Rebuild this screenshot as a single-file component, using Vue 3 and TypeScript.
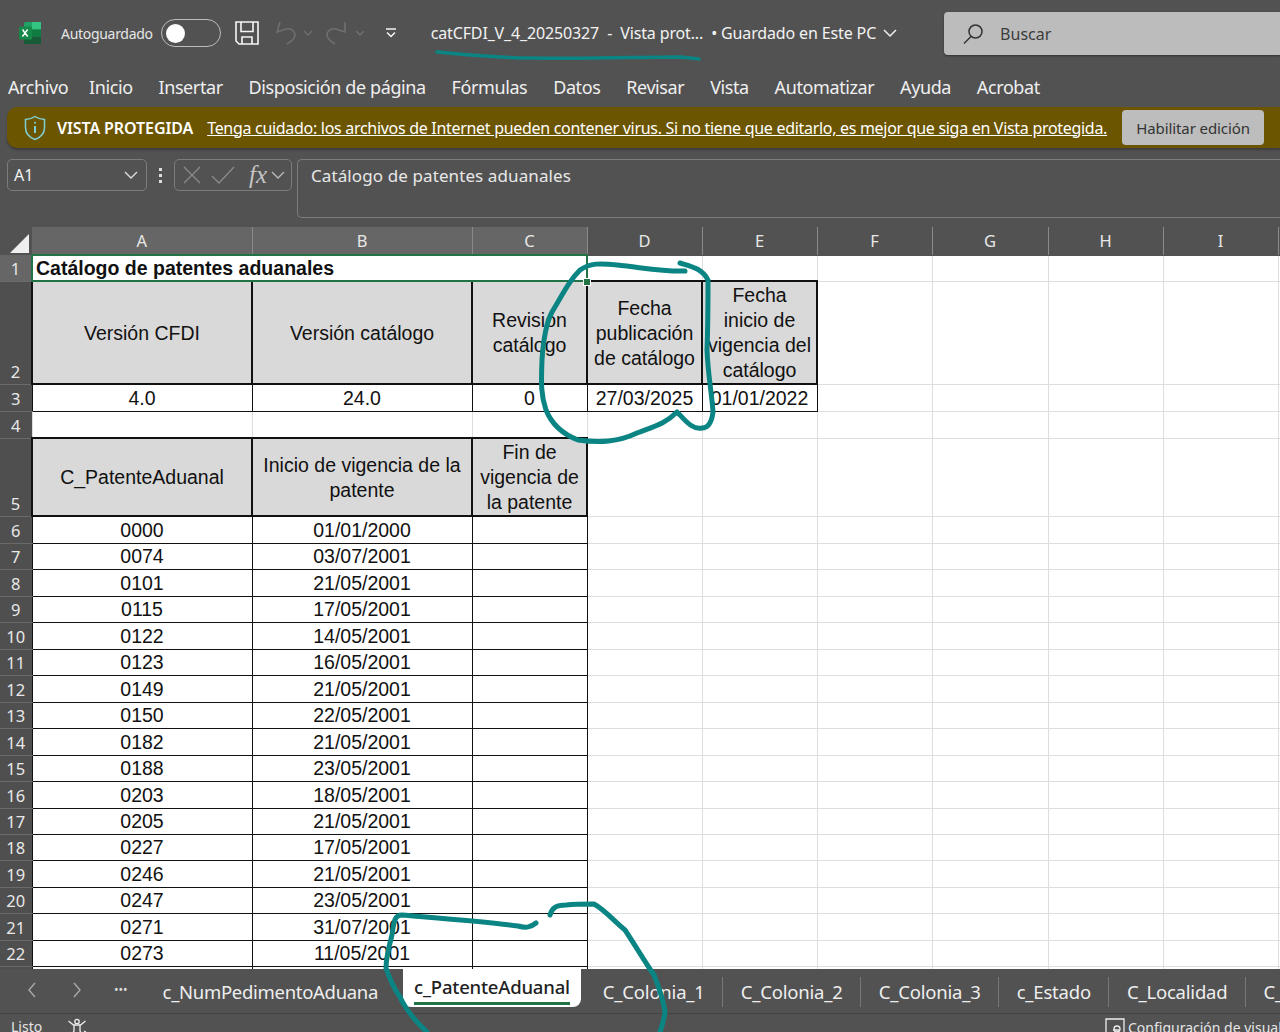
<script setup lang="ts">
type Cell = { text?: string, cls?: string, span?: number }
type Row = { n: number, h: number, cells: Cell[] }

const menu = ['Archivo', 'Inicio', 'Insertar', 'Disposición de página', 'Fórmulas', 'Datos', 'Revisar', 'Vista', 'Automatizar', 'Ayuda', 'Acrobat']
const columns = [
    { name: 'A', w: 220, on: true }, { name: 'B', w: 220, on: true }, { name: 'C', w: 115, on: true },
    { name: 'D', w: 115 }, { name: 'E', w: 115 }, { name: 'F', w: 115 }, { name: 'G', w: 116 },
    { name: 'H', w: 115 }, { name: 'I', w: 115 }, { name: '', w: 2 }
]
const tabsAfter = ['C_Colonia_1', 'C_Colonia_2', 'C_Colonia_3', 'c_Estado', 'C_Localidad', 'C_']

const patentes: [string, string][] = [
    ['0000', '01/01/2000'], ['0074', '03/07/2001'], ['0101', '21/05/2001'], ['0115', '17/05/2001'],
    ['0122', '14/05/2001'], ['0123', '16/05/2001'], ['0149', '21/05/2001'], ['0150', '22/05/2001'],
    ['0182', '21/05/2001'], ['0188', '23/05/2001'], ['0203', '18/05/2001'], ['0205', '21/05/2001'],
    ['0227', '17/05/2001'], ['0246', '21/05/2001'], ['0247', '23/05/2001'], ['0271', '31/07/2001'],
    ['0273', '11/05/2001']
]

function blanks(count: number): Cell[] {
    return Array.from({ length: count }, () => ({}))
}

const dataHeights = [27, 26, 27, 26, 27, 26, 27, 26, 27, 26, 27, 26, 26, 27, 26, 27, 26]

const rows: Row[] = [
    { n: 1, h: 26, cells: [{ text: 'Catálogo de patentes aduanales', cls: 'title', span: 3 }, ...blanks(7)] },
    {
        n: 2, h: 100, cells: [
            { text: 'Versión CFDI', cls: 'head' }, { text: 'Versión catálogo', cls: 'head' },
            { text: 'Revisión\ncatálogo', cls: 'head' }, { text: 'Fecha\npublicación\nde catálogo', cls: 'head' },
            { text: 'Fecha\ninicio de\nvigencia del\ncatálogo', cls: 'head' }, ...blanks(5)
        ]
    },
    {
        n: 3, h: 27, cells: [
            { text: '4.0', cls: 'line' }, { text: '24.0', cls: 'line' }, { text: '0', cls: 'line' },
            { text: '27/03/2025', cls: 'line' }, { text: '01/01/2022', cls: 'line' }, ...blanks(5)
        ]
    },
    { n: 4, h: 27, cells: blanks(10) },
    {
        n: 5, h: 77, cells: [
            { text: 'C_PatenteAduanal', cls: 'head' }, { text: 'Inicio de vigencia de la\npatente', cls: 'head' },
            { text: 'Fin de\nvigencia de\nla patente', cls: 'head' }, ...blanks(7)
        ]
    },
    ...patentes.map(([clave, fecha], i): Row => ({
        n: i + 6, h: dataHeights[i], cells: [
            { text: clave, cls: 'line' }, { text: fecha, cls: 'line' }, { cls: 'line' }, ...blanks(7)
        ]
    })),
    { n: 23, h: 26, cells: [{ cls: 'line' }, { cls: 'line' }, { cls: 'line' }, ...blanks(7)] }
]
</script>

<template>
    <div class="app">
        <header class="titlebar">
            <svg class="logo" width="24" height="24" viewBox="0 0 24 24">
                <rect x="6" y="1" width="17" height="22" rx="1.500" fill="#21a366" />
                <rect x="14" y="1" width="9" height="7.500" fill="#33c481" />
                <rect x="14" y="8.500" width="9" height="7" fill="#107c41" />
                <rect x="6" y="15.500" width="17" height="7.500" fill="#185c37" />
                <rect x="1" y="5.500" width="13" height="13" rx="1.200" fill="#15894a" />
                <path d="M4.600 8.500l2.400 3.600-2.600 3.400M9.600 8.500L7 12.100l2.800 3.400" stroke="#fff" stroke-width="1.500" fill="none" />
            </svg>
            <span class="autosave">Autoguardado</span>
            <span class="toggle"><span class="knob"></span></span>
            <svg class="save" width="24" height="24" viewBox="0 0 24 24" fill="none" stroke="#f5f5f5" stroke-width="1.600">
                <path d="M1 1h22v22H4l-3-3z" />
                <path d="M6 1v9.500h12V1M7 23v-7h10v7" />
            </svg>
            <svg class="undo" width="22" height="24" viewBox="0 0 22 24" fill="none" stroke="#6f6f6f" stroke-width="1.600">
                <path d="M5 1L2 11l9-3c5-1 9 2 9 6 0 3-3 6-8 9" />
            </svg>
            <svg class="tiny" width="10" height="6" viewBox="0 0 10 6" fill="none" stroke="#6f6f6f" stroke-width="1.300"><path d="M1 1l4 4 4-4" /></svg>
            <svg class="redo" width="22" height="24" viewBox="0 0 22 24" fill="none" stroke="#6f6f6f" stroke-width="1.600">
                <path d="M19 1v10l-9-3C5 7 1 10 1 14c0 3 3 6 8 9" />
            </svg>
            <svg class="tiny next" width="10" height="6" viewBox="0 0 10 6" fill="none" stroke="#6f6f6f" stroke-width="1.300"><path d="M1 1l4 4 4-4" /></svg>
            <svg class="custom" width="12" height="12" viewBox="0 0 12 12" fill="none" stroke="#f5f5f5" stroke-width="1.500">
                <path d="M1 2h10M2 5.500l4 4 4-4" />
            </svg>
            <span class="docname">catCFDI_V_4_20250327&nbsp; -&nbsp; Vista prot...&nbsp; • Guardado en Este PC</span>
            <svg class="docchev" width="14" height="9" viewBox="0 0 14 9" fill="none" stroke="#f0f0f0" stroke-width="1.500"><path d="M1 1l6 6 6-6" /></svg>
            <div class="search">
                <svg width="22" height="22" viewBox="0 0 22 22" fill="none" stroke="#333" stroke-width="1.500">
                    <circle cx="13.500" cy="8.500" r="6.500" />
                    <path d="M9 13.500L2 20.500" />
                </svg>
                <span>Buscar</span>
            </div>
        </header>

        <nav class="menu">
            <span v-for="item in menu" :key="item">{{ item }}</span>
        </nav>

        <div class="warning">
            <svg width="22" height="26" viewBox="0 0 22 26" fill="none" stroke="#7fd0d6" stroke-width="1.500">
                <path d="M11 1.500c3 2 6 3 9.500 3v8c0 6-4 10-9.500 12-5.500-2-9.500-6-9.500-12v-8c3.500 0 6.500-1 9.500-3z" />
                <path d="M11 11v7" stroke-width="2" />
                <circle cx="11" cy="7.800" r="1" fill="#7fd0d6" stroke="none" />
            </svg>
            <strong>VISTA PROTEGIDA</strong>
            <a>Tenga cuidado: los archivos de Internet pueden contener virus. Si no tiene que editarlo, es mejor que siga en Vista protegida.</a>
            <button class="enable">Habilitar edición</button>
        </div>

        <div class="formula">
            <div class="namebox">
                <span>A1</span>
                <svg width="14" height="9" viewBox="0 0 14 9" fill="none" stroke="#ddd" stroke-width="1.400"><path d="M1 1l6 6 6-6" /></svg>
            </div>
            <span class="dots"><i></i><i></i><i></i></span>
            <div class="fxbox">
                <svg width="18" height="18" viewBox="0 0 18 18" fill="none" stroke="#8a8a8a" stroke-width="1.300"><path d="M1 1l16 16M17 1L1 17" /></svg>
                <svg width="24" height="18" viewBox="0 0 24 18" fill="none" stroke="#8a8a8a" stroke-width="1.300"><path d="M1 10l7 7L23 1" /></svg>
                <span class="fx">fx</span>
                <svg width="14" height="8" viewBox="0 0 14 8" fill="none" stroke="#bbb" stroke-width="1.300"><path d="M1 1l6 6 6-6" /></svg>
            </div>
            <div class="bar">Catálogo de patentes aduanales</div>
        </div>

        <div class="sheet">
            <table>
                <colgroup>
                    <col style="width: 32px" />
                    <col v-for="col in columns" :key="col.name" :style="{ width: col.w + 'px' }" />
                </colgroup>
                <thead>
                    <tr>
                        <th class="corner"><span></span></th>
                        <th v-for="col in columns" :key="col.name" class="colhead" :class="{ on: col.on }">{{ col.name }}</th>
                    </tr>
                </thead>
                <tbody>
                    <tr v-for="row in rows" :key="row.n" :style="{ height: row.h + 'px' }">
                        <th class="rowhead" :class="{ on: row.n === 1 }">{{ row.n < 23 ? row.n : '' }}</th>
                        <td v-for="(cell, i) in row.cells" :key="i" :class="cell.cls" :colspan="cell.span">{{ cell.text }}</td>
                    </tr>
                </tbody>
            </table>
            <span class="handle"></span>
        </div>

        <div class="tabs">
            <svg class="nav" width="10" height="16" viewBox="0 0 10 16" fill="none" stroke="#a8a8a8" stroke-width="1.400"><path d="M8 1L2 8l6 7" /></svg>
            <svg class="nav next" width="10" height="16" viewBox="0 0 10 16" fill="none" stroke="#a8a8a8" stroke-width="1.400"><path d="M2 1l6 7-6 7" /></svg>
            <span class="more">•••</span>
            <span class="tab first">c_NumPedimentoAduana</span>
            <span class="tab active"><b>c_PatenteAduanal</b></span>
            <span v-for="tab in tabsAfter" :key="tab" class="tab">{{ tab }}</span>
        </div>

        <footer class="status">
            <span class="ready">Listo</span>
            <svg class="access" width="22" height="18" viewBox="0 0 22 18" fill="none" stroke="#eee" stroke-width="1.300">
                <circle cx="10" cy="3.500" r="2.200" />
                <path d="M1.500 3l5 4h7l5-4M7 7v6l-3 5M13 7v6l3 5M17 13l3 2-2 2" />
            </svg>
            <div class="view">
                <svg width="20" height="16" viewBox="0 0 20 16" fill="none" stroke="#eee" stroke-width="1.300">
                    <path d="M1 14V1h18v13M8 12h6" />
                    <circle cx="12" cy="11" r="3" />
                </svg>
                <span>Configuración de visualización</span>
            </div>
        </footer>

        <!-- trazos a mano sobre la captura -->
        <svg class="ink" width="1280" height="1032" viewBox="0 0 1280 1032" fill="none" stroke="#0b8583" stroke-width="5" stroke-linecap="round" stroke-linejoin="round">
            <path d="M437 52C470 55 500 58 530 58C590 59 640 57 681 57L699 59" stroke-width="3.500" />
            <path d="M685 271C665 272 645 268 617 265C600 263 590 263 580 270C570 280 565 290 552 312C545 325 543 345 542 360C541 385 541 395 546 410C552 425 565 435 578 440C600 443 618 442 637 433C655 426 665 424 677 412C685 420 692 430 702 428C710 428 712 420 713 412C712 395 708 375 707 350C708 325 708 300 708 280C702 268 690 266 680 263" />
            <path d="M536 923C530 928 525 928 518 926C490 922 450 919 402 915C395 915 394 920 392 935C388 950 386 960 386 968C390 980 395 990 400 997C405 1008 412 1018 427 1032" />
            <path d="M550 915C552 908 556 905 566 905C575 904 585 904 594 904C605 910 615 922 625 930C635 945 645 962 654 975C660 990 664 1005 665 1012C664 1020 662 1026 660 1032" />
        </svg>
    </div>
</template>

<style>
html, body {
    margin: 0;
    background: #525252;
}
</style>

<style scoped>
.app {
    position: relative;
    width: 1280px;
    height: 1032px;
    overflow: hidden;
    display: flex;
    flex-direction: column;
    background: #525252;
    color: #f2f2f2;
    font-family: "Noto Sans", "Liberation Sans", sans-serif;
}

.titlebar {
    flex: none;
    height: 66px;
    display: flex;
    align-items: center;
    padding-left: 18px;
    box-sizing: border-box;
}

.logo {
    flex: none;
}

.autosave {
    margin-left: 19px;
    font-size: 14px;
    letter-spacing: -0.3px;
    color: #e6e6e6;
}

.toggle {
    margin-left: 8px;
    width: 54px;
    height: 26px;
    border: 1.500px solid #bdbdbd;
    border-radius: 15px;
    display: flex;
    align-items: center;
    padding-left: 4px;
}

.knob {
    width: 19px;
    height: 19px;
    border-radius: 50%;
    background: #fff;
}

.save {
    margin-left: 14px;
}

.undo {
    margin-left: 16px;
}

.redo {
    margin-left: 13px;
}

.tiny {
    margin-left: 6px;
}

.tiny.next {
    margin-left: 7px;
}

.custom {
    margin-left: 20px;
}

.docname {
    margin-left: 34px;
    font-size: 16px;
    letter-spacing: -0.14px;
    white-space: nowrap;
}

.docchev {
    margin-left: 7px;
}

.search {
    margin-left: 47px;
    flex: 1;
    height: 43px;
    margin-top: 1px;
    border-radius: 4px 0 0 4px;
    background: #bcbcbc;
    box-shadow: 0 1px 2px #333;
    display: flex;
    align-items: center;
    gap: 16px;
    padding-left: 18px;
    color: #3c3c3c;
    font-size: 16px;
}

.menu {
    flex: none;
    height: 41px;
    display: flex;
    align-items: center;
    gap: 25.800px;
    padding: 0 0 0 8px;
    box-sizing: border-box;
    font-size: 18px;
    letter-spacing: -0.4px;
    color: #efefef;
    white-space: nowrap;
}

.menu span:first-child {
    margin-right: -5px;
}

.warning {
    flex: none;
    height: 41px;
    margin-left: 7px;
    border-radius: 10px 0 0 10px;
    background: #6c5500;
    display: flex;
    align-items: center;
    padding-left: 17px;
    box-shadow: 0 2px 2px #3d3d3d;
    font-size: 16px;
    letter-spacing: -0.3px;
    color: #fff;
}

.warning strong {
    margin-left: 11px;
    font-weight: 600;
    letter-spacing: -0.1px;
    white-space: nowrap;
}

.warning a {
    margin-left: 14px;
    text-decoration: underline;
    white-space: nowrap;
}

.enable {
    margin-left: 15px;
    width: 142px;
    height: 35px;
    border: none;
    border-radius: 4px;
    background: #bdbdbd;
    color: #333;
    font: inherit;
    font-size: 15px;
    letter-spacing: -0.1px;
    flex: none;
}

.formula {
    flex: none;
    height: 79px;
    display: flex;
    align-items: flex-start;
    padding: 11px 0 0 7px;
    box-sizing: border-box;
}

.namebox, .fxbox {
    height: 32px;
    border: 1px solid #7c7c7c;
    border-radius: 5px;
    box-sizing: border-box;
    display: flex;
    align-items: center;
}

.namebox {
    width: 140px;
    justify-content: space-between;
    padding: 0 8px 0 6px;
    font-size: 16px;
}

.dots {
    width: 27px;
    height: 32px;
    display: flex;
    flex-direction: column;
    align-items: center;
    justify-content: center;
    gap: 3px;
}

.dots i {
    width: 3px;
    height: 3px;
    background: #ddd;
}

.fxbox {
    width: 118px;
    gap: 10px;
    padding-left: 8px;
}

.fx {
    font-family: "Liberation Serif", serif;
    font-style: italic;
    font-size: 25px;
    color: #c4c4c4;
    margin-left: 4px;
    margin-right: -6px;
}

.bar {
    margin-left: 5px;
    flex: 1;
    height: 59px;
    border: 1px solid #7c7c7c;
    border-right: none;
    border-radius: 5px 0 0 5px;
    box-sizing: border-box;
    padding: 4px 0 0 13px;
    font-size: 17px;
    letter-spacing: 0.1px;
    color: #e8e8e8;
}

.sheet {
    position: relative;
    flex: none;
    height: 742px;
    overflow: hidden;
    background: #fff;
}

table {
    table-layout: fixed;
    border-collapse: collapse;
    width: 1280px;
    font-family: "Liberation Sans", Arial, sans-serif;
    font-size: 19.500px;
    color: #111;
}

td {
    padding: 0;
    border: 1px solid #dedede;
    text-align: center;
    white-space: pre-line;
    line-height: 20px;
}

td.title {
    border: 2px solid #217346;
    text-align: left;
    font-weight: bold;
    padding-left: 3px;
}

td.head {
    background: #d9d9d9;
    border: 2px solid #111;
    line-height: 25px;
    padding-top: 1px;
}

td.line {
    border: 1px solid #111;
}

th {
    padding: 0;
    font-weight: normal;
    font-family: "Noto Sans", sans-serif;
    color: #e8e8e8;
    font-size: 16.500px;
    line-height: 20px;
}

.colhead {
    height: 27px;
    background: #525252;
    border-right: 1px solid #8a8a8a;
    border-bottom: 1px solid #525252;
}

.colhead.on {
    background: #666;
}

.corner {
    background: #525252;
}

.corner span {
    display: block;
    width: 0;
    height: 0;
    margin-left: 10px;
    margin-top: 4px;
    border-left: 19px solid transparent;
    border-bottom: 19px solid #efefef;
}

.rowhead {
    background: #4f4f4f;
    border-bottom: 1px solid #6b6b6b;
    vertical-align: bottom;
    padding-bottom: 2px;
}

.rowhead.on {
    background: #666;
}

.handle {
    position: absolute;
    left: 583px;
    top: 51px;
    width: 6px;
    height: 6px;
    background: #217346;
    border: 1px solid #fff;
}

.tabs {
    flex: none;
    height: 45px;
    background: #525252;
    display: flex;
    align-items: flex-start;
    box-sizing: border-box;
    padding-left: 27px;
    font-size: 18.500px;
    letter-spacing: -0.2px;
    color: #eee;
    white-space: nowrap;
    border-bottom: 1px solid #444;
}

.nav {
    margin-top: 13px;
    flex: none;
}

.nav.next {
    margin-left: 35px;
}

.more {
    margin: 12px 0 0 32px;
    font-size: 12px;
    letter-spacing: 0;
    color: #ddd;
}

.tab {
    height: 30px;
    margin-top: 8px;
    padding: 0 17.500px;
    line-height: 30px;
    border-right: 1px solid #777;
}

.tab.first {
    margin-left: 8px;
    padding: 0 25px 0 27px;
    letter-spacing: -0.3px;
    border-right: none;
}

.tab.active {
    height: 38px;
    margin-top: 0;
    width: 178px;
    box-sizing: border-box;
    padding: 3px 11px 0;
    background: #fff;
    color: #222;
    border: none;
    border-radius: 0 0 8px 8px;
    text-align: center;
    margin-right: 4.500px;
}

.tab.active b {
    display: block;
    font-weight: 500;
    height: 30px;
    line-height: 30px;
    border-bottom: 3px solid #217346;
}

.status {
    flex: 1;
    display: flex;
    align-items: flex-start;
    font-size: 14px;
    color: #e6e6e6;
    padding-left: 11px;
    white-space: nowrap;
    overflow: hidden;
}

.ready {
    margin-top: 3px;
}

.access {
    margin: 4px 0 0 25px;
    flex: none;
}

.view {
    position: absolute;
    left: 1105px;
    top: 1018px;
    display: flex;
    gap: 3px;
    align-items: flex-start;
}

.ink {
    position: absolute;
    left: 0;
    top: 0;
    pointer-events: none;
}
</style>
